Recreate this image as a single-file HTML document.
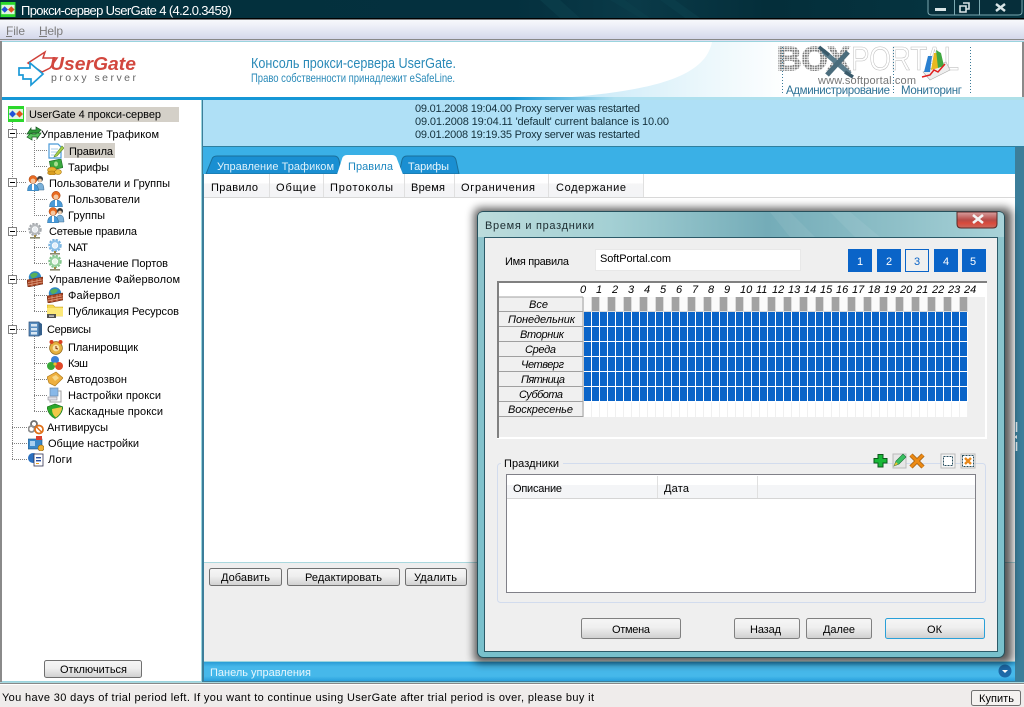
<!DOCTYPE html>
<html lang="ru">
<head>
<meta charset="utf-8">
<title>Прокси-сервер UserGate 4</title>
<style>
html,body{margin:0;padding:0;width:1024px;height:707px;overflow:hidden;background:#efefef}
svg{display:block}
text{font-family:"Liberation Sans","DejaVu Sans",sans-serif;font-size:11px;fill:#000}
.i{font-style:italic}
</style>
</head>
<body>
<svg width="1024" height="707" viewBox="0 0 1024 707" xmlns="http://www.w3.org/2000/svg">
<defs>
<linearGradient id="menu" x1="0" y1="0" x2="0" y2="1"><stop offset="0" stop-color="#f8f9fc"/><stop offset=".3" stop-color="#eef0f8"/><stop offset="1" stop-color="#d3d7ea"/></linearGradient>
<linearGradient id="hline" x1="0" y1="0" x2="1" y2="0"><stop offset="0" stop-color="#1597d6"/><stop offset=".5" stop-color="#1597d6"/><stop offset=".6" stop-color="#aee0f0"/><stop offset="1" stop-color="#aee0e8"/></linearGradient>
<linearGradient id="swoosh" x1="0" y1="0" x2="1" y2="0"><stop offset="0" stop-color="#c8e9f8"/><stop offset=".55" stop-color="#e8f6fb"/><stop offset="1" stop-color="#ffffff"/></linearGradient>
<linearGradient id="bar" x1="0" y1="0" x2="0" y2="1"><stop offset="0" stop-color="#2a9cd6"/><stop offset=".25" stop-color="#46b8ea"/><stop offset=".75" stop-color="#46b8ea"/><stop offset="1" stop-color="#28a0dc"/></linearGradient>
<linearGradient id="btn" x1="0" y1="0" x2="0" y2="1"><stop offset="0" stop-color="#f6f6f6"/><stop offset=".45" stop-color="#efefef"/><stop offset="1" stop-color="#cfcfcf"/></linearGradient>
<linearGradient id="dlg" x1="0" y1="0" x2="1" y2="0"><stop offset="0" stop-color="#bcdcdc"/><stop offset=".25" stop-color="#a4d0d4"/><stop offset=".55" stop-color="#74acb8"/><stop offset=".8" stop-color="#8fc0c8"/><stop offset="1" stop-color="#a8d2d8"/></linearGradient>
<linearGradient id="frame" x1="0" y1="0" x2="0" y2="1"><stop offset="0" stop-color="#8fc4cc"/><stop offset="1" stop-color="#78c0cc"/></linearGradient>
<linearGradient id="close" x1="0" y1="0" x2="0" y2="1"><stop offset="0" stop-color="#d8a0a0"/><stop offset=".5" stop-color="#b84a46"/><stop offset=".7" stop-color="#d84a3c"/><stop offset="1" stop-color="#c86a60"/></linearGradient>
<linearGradient id="head" x1="0" y1="0" x2="0" y2="1"><stop offset="0" stop-color="#ffffff"/><stop offset=".4" stop-color="#ffffff"/><stop offset=".42" stop-color="#f5f5f6"/><stop offset="1" stop-color="#f3f4f6"/></linearGradient>
<linearGradient id="title" x1="0" y1="0" x2="1" y2="0"><stop offset="0" stop-color="#02303c"/><stop offset=".5" stop-color="#04303e"/><stop offset=".62" stop-color="#0a3a48"/><stop offset=".75" stop-color="#042e3a"/><stop offset="1" stop-color="#063642"/></linearGradient>
<pattern id="blue" x="584" y="312" width="8" height="15" patternUnits="userSpaceOnUse"><rect width="7" height="14" fill="#0a64c8"/></pattern>
<pattern id="sun" x="584" y="402" width="8" height="15" patternUnits="userSpaceOnUse"><rect width="8" height="15" fill="#f0f0f0"/><rect width="7" height="15" fill="#fff"/></pattern>
<pattern id="all" x="584" y="297" width="16" height="15" patternUnits="userSpaceOnUse"><rect width="16" height="15" fill="#dcdcdc"/><rect width="7" height="14" fill="#fafafa"/><rect x="8" width="7" height="14" fill="#a2a2a2"/></pattern>
<pattern id="dots" x="0" y="0" width="2.5" height="2.5" patternUnits="userSpaceOnUse"><rect width="1.8" height="1.8" fill="#7c7c7c"/></pattern>
<filter id="sh" x="-10%" y="-10%" width="120%" height="120%"><feGaussianBlur stdDeviation="4.5"/></filter>

<symbol id="traffic" viewBox="0 0 16 16"><path d="M1 9 L5 3 L5 5 L10 5 L10 2 L15 5 L11 9 L10 8 L6 8 L6 9Z" fill="#2f9a3a" stroke="#185a20" stroke-width=".7"/><path d="M15 8 L11 14 L11 12 L6 12 L6 15 L1 12 L5 8 L6 9 L10 9 L10 8Z" fill="#58c45e" stroke="#185a20" stroke-width=".7"/></symbol>
<symbol id="doc" viewBox="0 0 16 16"><path d="M1 1H10L13 4V15H1Z" fill="#fff" stroke="#4a9ad8" stroke-width="1.2"/><path d="M3 6H10M3 9H9M3 12H8" stroke="#a8cce8"/><path d="M7 12 L14 3 L16 5 L9 13 L6 14Z" fill="#a8d048" stroke="#5a8a28" stroke-width=".6"/></symbol>
<symbol id="money" viewBox="0 0 16 16"><rect x="3" y="1" width="12" height="9" fill="#3aa83e" stroke="#1c6a24" stroke-width=".6" transform="rotate(-12 9 5)"/><ellipse cx="9" cy="5" rx="2" ry="2.5" fill="#a6e08e"/><ellipse cx="5" cy="11" rx="4.4" ry="3" fill="#e8b030" stroke="#a87410" stroke-width=".6"/><ellipse cx="5" cy="14" rx="4.4" ry="2" fill="#d89c20" stroke="#a87410" stroke-width=".6"/><ellipse cx="11" cy="13" rx="3.4" ry="2.4" fill="#f0c040" stroke="#a87410" stroke-width=".6"/></symbol>
<symbol id="users" viewBox="0 0 18 16"><circle cx="13" cy="4" r="3" fill="#3a3a3a"/><circle cx="13" cy="5.4" r="1.8" fill="#f0d0b0"/><path d="M9 15 Q9 8 13 8 Q17 8 17 15Z" fill="#7ab0d8" stroke="#3a6a90" stroke-width=".5"/><circle cx="6" cy="4.5" r="4" fill="#e86a20" stroke="#a04010" stroke-width=".5"/><circle cx="6" cy="6" r="2.4" fill="#f6c8a0"/><path d="M0.5 16 Q0.5 9 6 9 Q11.5 9 11.5 16Z" fill="#4a9ad8" stroke="#2a6a98" stroke-width=".5"/><path d="M5 9H7V15H5Z" fill="#fff"/></symbol>
<symbol id="user" viewBox="0 0 16 16"><circle cx="8" cy="4.5" r="4.2" fill="#e86a20" stroke="#a04010" stroke-width=".5"/><circle cx="8" cy="6" r="2.5" fill="#f6c8a0"/><path d="M1.5 16 Q1.5 9 8 9 Q14.5 9 14.5 16Z" fill="#4a9ad8" stroke="#2a6a98" stroke-width=".5"/><path d="M7 9H9V15H7Z" fill="#fff"/></symbol>
<symbol id="gear" viewBox="0 0 16 16"><circle cx="8" cy="6.5" r="5" fill="none" stroke="#a4a8ac" stroke-width="3.4" stroke-dasharray="2 1"/><circle cx="8" cy="6.5" r="4.2" fill="none" stroke="#b4b8bc" stroke-width="2"/><circle cx="8" cy="6.5" r="2.4" fill="#e8ecf0"/><rect x="7" y="12" width="2" height="3" fill="#a08840"/><rect x="3" y="14" width="10" height="1.6" fill="#8a8a70"/></symbol>
<symbol id="gearb" viewBox="0 0 16 16"><circle cx="8" cy="6.5" r="5" fill="none" stroke="#7ab4e0" stroke-width="3.4" stroke-dasharray="2 1"/><circle cx="8" cy="6.5" r="4.2" fill="none" stroke="#8cc0e8" stroke-width="2"/><circle cx="8" cy="6.5" r="2.4" fill="#e4f0fa"/><rect x="7" y="12" width="2" height="3" fill="#a08840"/><rect x="3" y="14" width="10" height="1.6" fill="#8a8a70"/></symbol>
<symbol id="gearg" viewBox="0 0 16 16"><circle cx="8" cy="6.5" r="5" fill="none" stroke="#80c48a" stroke-width="3.4" stroke-dasharray="2 1"/><circle cx="8" cy="6.5" r="4.2" fill="none" stroke="#94d09c" stroke-width="2"/><circle cx="8" cy="6.5" r="2.4" fill="#e8f6ea"/><rect x="7" y="12" width="2" height="3" fill="#a08840"/><rect x="3" y="14" width="10" height="1.6" fill="#8a8a70"/></symbol>
<symbol id="fire" viewBox="0 0 16 16"><circle cx="8" cy="6.5" r="6.2" fill="#2f88c4"/><path d="M3 4 Q8 0 11 3 Q9 7 5 7Z" fill="#58b058"/><path d="M0 9 L16 6 L16 13 L1 16Z" fill="#a84424" stroke="#6a2810" stroke-width=".6"/><path d="M1 11.5 L16 8.8M1 14 L16 11M5 8.5 V15 M10 7.5 V14 M13 7 V10" stroke="#e0a080" stroke-width=".7"/></symbol>
<symbol id="folder" viewBox="0 0 16 16"><path d="M0 2H6L8 4H16V13H0Z" fill="#f4d850" stroke="#c8a020" stroke-width=".6"/><path d="M0 5H16V13H0Z" fill="#fce878"/><rect x="0" y="11" width="9" height="4" fill="#505050"/><rect x="2" y="12.5" width="5" height="1.2" fill="#e0e0e0"/></symbol>
<symbol id="cab" viewBox="0 0 16 16"><path d="M2 1H12V15H2Z" fill="#5a8ec0" stroke="#2a4e78" stroke-width=".7"/><path d="M12 1L15 3V14L12 15Z" fill="#35608c"/><rect x="4" y="3" width="6" height="2.5" fill="#d8e6f2"/><rect x="4" y="7" width="6" height="2.5" fill="#d8e6f2"/><rect x="4" y="11" width="6" height="2.5" fill="#d8e6f2"/></symbol>
<symbol id="clock" viewBox="0 0 16 16"><circle cx="8" cy="9" r="6.4" fill="#e4b040" stroke="#8a6010" stroke-width=".7"/><circle cx="8" cy="9" r="3.4" fill="#f8e4a8"/><path d="M8 7V9.5L10 10" stroke="#803010" fill="none"/><circle cx="3.5" cy="3" r="2" fill="#d84020"/><circle cx="12.5" cy="3" r="2" fill="#d84020"/></symbol>
<symbol id="cache" viewBox="0 0 16 16"><circle cx="8" cy="5" r="4" fill="#3a80d8"/><circle cx="4" cy="11" r="4" fill="#38a838"/><circle cx="12" cy="11" r="4" fill="#e04828"/><circle cx="8" cy="9" r="1.6" fill="#f0c030"/></symbol>
<symbol id="phone" viewBox="0 0 16 16"><path d="M0 6 L9 1 L16 7 L8 15 L2 12Z" fill="#eeb040" stroke="#b07a18" stroke-width=".7"/><path d="M5 6 L9 4 L12 7 L8 10Z" fill="#f8d888"/></symbol>
<symbol id="proxy" viewBox="0 0 16 16"><rect x="3" y="1" width="8" height="8" fill="#88b8e8" stroke="#6a8ab0" stroke-width=".7"/><path d="M11 4H14V15H3V11" fill="none" stroke="#a0a0a0"/><rect x="1" y="10" width="9" height="3" fill="#e0e0e8" stroke="#909098" stroke-width=".6"/></symbol>
<symbol id="shield" viewBox="0 0 16 16"><path d="M0 4 L8 1 L16 4 Q15 12 8 15.5 Q1 12 0 4Z" fill="#2ca82c" stroke="#186a18" stroke-width=".6"/><path d="M5 6 L15 4 Q15 10 9 14.5 Q5 12 5 6Z" fill="#f0c848"/></symbol>
<symbol id="av" viewBox="0 0 16 16"><circle cx="6" cy="5" r="3" fill="none" stroke="#707070" stroke-width="1.8"/><circle cx="3.5" cy="10" r="3" fill="none" stroke="#909090" stroke-width="1.8"/><circle cx="11" cy="10.5" r="4" fill="#fff" stroke="#e07018" stroke-width="1.8"/><path d="M8.5 8 L13.5 13" stroke="#e07018" stroke-width="1.4"/></symbol>
<symbol id="set" viewBox="0 0 16 16"><rect x="0" y="4" width="14" height="10" fill="#3a88c8" stroke="#1c5080" stroke-width=".6"/><rect x="2" y="6" width="5" height="5" fill="#a8d0f0"/><rect x="8" y="1" width="6" height="4" fill="#d84030"/><circle cx="13" cy="13" r="3" fill="#f0b030" stroke="#906010" stroke-width=".6"/></symbol>
<symbol id="log" viewBox="0 0 16 16"><circle cx="5" cy="7" r="5" fill="#2a70c0"/><rect x="6" y="3" width="9" height="12" fill="#fff" stroke="#303050" stroke-width=".8"/><rect x="8" y="6" width="5" height="1.4" fill="#2a50a0"/><rect x="8" y="9" width="5" height="1.4" fill="#2a50a0"/><rect x="8" y="12" width="3" height="1" fill="#f0a020"/></symbol>
<symbol id="ug" viewBox="0 0 16 16"><rect width="16" height="16" fill="#2cd82c"/><rect x="1" y="3" width="14" height="10" fill="#dff5df"/><path d="M1 8 L4.5 4.5 L8 8 L4.5 11.5Z" fill="#2050d8"/><path d="M8 8 L11.5 4.5 L15 8 L11.5 11.5Z" fill="#e0521c"/></symbol>
</defs>

<!-- title bar -->
<rect width="1024" height="18" fill="url(#title)"/>
<path d="M540 0L560 18H580L560 0ZM610 0L640 18H650L625 0ZM660 0L685 18H700L675 0Z" fill="#0c3e4c" opacity=".7"/>
<use href="#ug" x="0" y="2" width="16" height="15"/>
<text x="21" y="15" textLength="211" style="font-size:13px;fill:#fff">Прокси-сервер UserGate 4 (4.2.0.3459)</text>
<path d="M928 0V12Q928 15 932 15H1018Q1022 15 1022 12V0" fill="#062e3a" stroke="#7aa8b0"/>
<path d="M954.5 0V15M979.5 0V15" stroke="#7aa8b0"/>
<rect x="935" y="8" width="11" height="3" fill="#d8e4e6"/>
<path d="M960 6H966V12H960Z M963 3H969V9H966" fill="none" stroke="#d8e4e6" stroke-width="1.6"/>
<path d="M996 4L1005 11M1005 4L996 11" stroke="#d8e4e6" stroke-width="2.4"/>
<rect y="18" width="1024" height="1.5" fill="#000"/>

<!-- menu -->
<rect y="19.5" width="1024" height="20" fill="url(#menu)"/>
<rect y="39" width="1024" height="1" fill="#888"/>
<rect y="40" width="1024" height="1" fill="#dde"/>
<text x="6" y="35" textLength="19" style="font-size:12px;fill:#7c7c7c">File</text>
<text x="39" y="35" textLength="24" style="font-size:12px;fill:#7c7c7c">Help</text>
<path d="M6 36.5H12M39 36.5H47" stroke="#7c7c7c"/>

<!-- header -->
<rect y="41" width="1024" height="59" fill="#8a8a8a"/>
<rect x="2" y="41" width="1022" height="1" fill="#9ad4de"/>
<rect x="2" y="42" width="1020" height="55" fill="#fff"/>
<path d="M572 97C650 90 705 78 712 42H790V97Z" fill="url(#swoosh)"/>
<rect x="2" y="97" width="1022" height="3" fill="url(#hline)"/>
<!-- logo -->
<path d="M28 63L45 52L43 58L57 58L50 68L42 72Z" fill="#fff" stroke="#d0413a" stroke-width="1.5"/>
<path d="M19 68L30 68L30 63L43 74L31 85L31 79L23 79L23 75L19 75Z" fill="#fff" stroke="#1c9ad8" stroke-width="1.7"/>
<text x="50" y="70" textLength="86" lengthAdjust="spacingAndGlyphs" style="font-size:18px;font-weight:bold;font-style:italic;fill:#d2473e">UserGate</text>
<text x="51" y="81" textLength="85" style="font-size:10.5px;fill:#666">proxy server</text>
<text x="251" y="68" textLength="205" lengthAdjust="spacingAndGlyphs" style="font-size:15px;fill:#2a8ab8">Консоль прокси-сервера UserGate.</text>
<text x="251" y="82" textLength="204" lengthAdjust="spacingAndGlyphs" style="font-size:12px;fill:#2a8ab8">Право собственности принадлежит eSafeLine.</text>
<!-- watermark -->
<text x="777" y="70" textLength="73" lengthAdjust="spacingAndGlyphs" style="font-size:33px;font-weight:bold;fill:url(#dots);stroke:url(#dots);stroke-width:1.6">BOX</text>
<text x="851" y="70" textLength="108" lengthAdjust="spacingAndGlyphs" style="font-size:33px;fill:#fff;stroke:#c0c0c0;stroke-width:.6">PORTAL</text>
<path d="M823 51L850 74" stroke="#5a7c8c" stroke-width="5"/>
<path d="M848 52L827 75" stroke="#4a6c7c" stroke-width="5"/>
<path d="M819 47L829 55M845 72L853 77" stroke="#3a5a6a" stroke-width="3.4"/>
<path d="M923 72L946 62L950 70L930 80Z" fill="#eee" stroke="#aaa" stroke-width=".6"/>
<path d="M924 72L928 56L932 56L930 72Z" fill="#2a80d0"/><path d="M931 70L934 53L939 53L938 68Z" fill="#e8b820"/><path d="M938 68L936 50L941 53L944 66Z" fill="#40a840"/>
<path d="M922 77L930 75L934 70L938 72L945 64" fill="none" stroke="#e02020" stroke-width="1.5"/>
<text x="818" y="84" textLength="98" style="font-size:11px;fill:#777">www.softportal.com</text>
<path d="M782.5 47V94M893.5 47V94M970.5 47V94" stroke="#3a7a98" stroke-dasharray="1 2"/>
<text x="786" y="94" textLength="104" style="font-size:11.5px;fill:#2e7296">Администрирование</text>
<text x="901" y="94" textLength="61" style="font-size:11.5px;fill:#2e7296">Мониторинг</text>

<!-- left panel -->
<rect x="0" y="100" width="203" height="585" fill="#8a8a8a"/>
<rect x="2" y="100" width="199" height="581" fill="#fff"/>
<rect x="2" y="681" width="199" height="1" fill="#9ad4de"/>
<rect x="201" y="100" width="1" height="582" fill="#9ad4de"/>

<!-- tree lines -->
<g stroke="#808080" stroke-dasharray="1 1" fill="none">
<path d="M12.5 120V459M34.5 140V166M34.5 189V215M34.5 238V263M34.5 286V311M34.5 336V411"/>
<path d="M17 133.5H26M17 182.5H26M17 231.5H26M17 279.5H26M17 329.5H26M12 427.5H28M12 443.5H28M12 459.5H28"/>
<path d="M34 150.5H48M34 166.5H48M34 199.5H48M34 215.5H48M34 247.5H48M34 263.5H48M34 295.5H48M34 311.5H48M34 347.5H48M34 363.5H48M34 379.5H48M34 395.5H48M34 411.5H48"/>
</g>
<g fill="#fff" stroke="#808080">
<rect x="8.5" y="129.5" width="8" height="8"/><rect x="8.5" y="178.5" width="8" height="8"/><rect x="8.5" y="227.5" width="8" height="8"/><rect x="8.5" y="275.5" width="8" height="8"/><rect x="8.5" y="325.5" width="8" height="8"/>
</g>
<path d="M10 133.5H15M10 182.5H15M10 231.5H15M10 279.5H15M10 329.5H15" stroke="#000"/>

<!-- tree icons -->
<use href="#ug" x="8" y="106" width="16" height="16"/>
<use href="#traffic" x="26" y="125" width="16" height="16"/>
<use href="#doc" x="48" y="143" width="16" height="16"/>
<use href="#money" x="47" y="159" width="16" height="16"/>
<use href="#users" x="27" y="175" width="18" height="16"/>
<use href="#user" x="48" y="191" width="16" height="16"/>
<use href="#users" x="47" y="207" width="18" height="16"/>
<use href="#gear" x="27" y="223" width="16" height="16"/>
<use href="#gearb" x="47" y="239" width="16" height="16"/>
<use href="#gearg" x="47" y="255" width="16" height="16"/>
<use href="#fire" x="27" y="271" width="16" height="16"/>
<use href="#fire" x="47" y="287" width="16" height="16"/>
<use href="#folder" x="47" y="303" width="16" height="16"/>
<use href="#cab" x="27" y="321" width="16" height="16"/>
<use href="#clock" x="48" y="339" width="16" height="16"/>
<use href="#cache" x="47" y="355" width="16" height="16"/>
<use href="#phone" x="47" y="371" width="16" height="16"/>
<use href="#proxy" x="47" y="387" width="16" height="16"/>
<use href="#shield" x="47" y="403" width="16" height="16"/>
<use href="#av" x="28" y="419" width="16" height="16"/>
<use href="#set" x="28" y="435" width="16" height="16"/>
<use href="#log" x="28" y="451" width="16" height="16"/>

<rect x="26" y="107" width="153" height="15" fill="#d4d0c8"/>
<rect x="64" y="143" width="51" height="15" fill="#d4d0c8"/>
<g>
<text x="29" y="118" textLength="132">UserGate 4 прокси-сервер</text>
<text x="41" y="138" textLength="118">Управление Трафиком</text>
<text x="69" y="155" textLength="44">Правила</text>
<text x="68" y="171" textLength="41">Тарифы</text>
<text x="49" y="187" textLength="121">Пользователи и Группы</text>
<text x="68" y="203" textLength="72">Пользователи</text>
<text x="68" y="219" textLength="37">Группы</text>
<text x="49" y="235" textLength="88">Сетевые правила</text>
<text x="68" y="251" textLength="20">NAT</text>
<text x="68" y="267" textLength="100">Назначение Портов</text>
<text x="49" y="283" textLength="131">Управление Файерволом</text>
<text x="68" y="299" textLength="52">Файервол</text>
<text x="68" y="315" textLength="111">Публикация Ресурсов</text>
<text x="47" y="333" textLength="44">Сервисы</text>
<text x="68" y="351" textLength="70">Планировщик</text>
<text x="68" y="367" textLength="20">Кэш</text>
<text x="67" y="383" textLength="60">Автодозвон</text>
<text x="68" y="399" textLength="93">Настройки прокси</text>
<text x="68" y="415" textLength="95">Каскадные прокси</text>
<text x="47" y="431" textLength="61">Антивирусы</text>
<text x="48" y="447" textLength="91">Общие настройки</text>
<text x="48" y="463" textLength="24">Логи</text>
</g>
<rect x="44.5" y="660.5" width="97" height="17" rx="2" fill="url(#btn)" stroke="#707070"/>
<text x="60" y="673" textLength="67">Отключиться</text>

<!-- right panel -->
<rect x="202" y="100" width="822" height="585" fill="#3c7e9a"/>
<rect x="203" y="100" width="821" height="47" fill="#afe0f6"/>
<rect x="203" y="146" width="821" height="1" fill="#2f7f9f"/>
<rect x="203" y="147" width="821" height="27" fill="#3ab0e6"/>
<text x="415" y="112" textLength="225" style="fill:#14303c">09.01.2008 19:04.00 Proxy server was restarted</text>
<text x="415" y="125" textLength="254" style="fill:#14303c">09.01.2008 19:04.11 'default' current balance is 10.00</text>
<text x="415" y="138" textLength="225" style="fill:#14303c">09.01.2008 19:19.35 Proxy server was restarted</text>

<rect x="204" y="174" width="811" height="388" fill="#fff"/>
<path d="M206 174L212 159Q213 156 217 156H334Q338 156 339 160L342 174Z" fill="#1a8fd2" stroke="#1a6f9a"/>
<path d="M399 174L402 160Q403 156 407 156H451Q455 156 456 160L459 174Z" fill="#1a8fd2" stroke="#1a6f9a"/>
<path d="M337 174.5L342 159Q343 155 347 155H392Q396 155 397 159L403 174.5Z" fill="#fff"/>
<text x="217" y="170" textLength="117" style="fill:#dff2fb">Управление Трафиком</text>
<text x="348" y="170" textLength="45" style="fill:#1e88c0">Правила</text>
<text x="408" y="170" textLength="41" style="fill:#e8f6fc">Тарифы</text>

<rect x="204" y="174" width="440" height="23" fill="url(#head)"/>
<rect x="204" y="197" width="811" height="1" fill="#d8d8d8"/>
<path d="M269.5 174V197M323.5 174V197M404.5 174V197M454.5 174V197M548.5 174V197M643.5 174V197" stroke="#e0e0e0"/>
<text x="211" y="191" textLength="47">Правило</text>
<text x="276" y="191" textLength="40">Общие</text>
<text x="330" y="191" textLength="63">Протоколы</text>
<text x="411" y="191" textLength="34">Время</text>
<text x="461" y="191" textLength="74">Ограничения</text>
<text x="556" y="191" textLength="70">Содержание</text>

<rect x="204" y="562" width="811" height="1" fill="#aad8de"/>
<rect x="204" y="563" width="811" height="99" fill="#eeeeee"/>
<g fill="url(#btn)" stroke="#707070">
<rect x="209.5" y="568.5" width="72" height="17" rx="2"/>
<rect x="287.5" y="568.5" width="112" height="17" rx="2"/>
<rect x="405.5" y="568.5" width="61" height="17" rx="2"/>
</g>
<text x="221" y="581" textLength="49">Добавить</text>
<text x="305" y="581" textLength="77">Редактировать</text>
<text x="414" y="581" textLength="43">Удалить</text>

<rect x="204" y="662" width="811" height="19" fill="url(#bar)"/>
<rect x="204" y="661" width="811" height="1" fill="#9ad4de"/>
<text x="210" y="676" textLength="101" style="fill:#e6f6fd">Панель управления</text>
<circle cx="1005" cy="671" r="6.5" fill="#1e6aa8"/>
<path d="M1002 670H1008L1005 673Z" fill="#fff"/>

<!-- collapse bar -->
<rect x="1015" y="147" width="9" height="536" fill="#3c7e9a"/>
<path d="M1016.5 422V432M1016.5 442V451" stroke="#e4eef2" stroke-width="1.6"/>
<path d="M1014 437L1017 435V439Z" fill="#e4eef2"/>

<!-- status -->
<rect y="682" width="1024" height="1" fill="#aad8de"/>
<rect y="683" width="1024" height="1" fill="#888"/>
<rect y="684" width="1024" height="1" fill="#fff"/>
<rect y="685" width="1024" height="22" fill="#efeceb"/>
<text x="2" y="701" textLength="592">You have 30 days of trial period left. If you want to continue using UserGate after trial period is over, please buy it</text>
<rect x="971.5" y="690.5" width="49" height="15" rx="2" fill="#f4f2f0" stroke="#707070"/>
<text x="979" y="702" textLength="35">Купить</text>

<!-- dialog -->
<rect x="474" y="208" width="538" height="455" rx="6" fill="#000" opacity=".65" filter="url(#sh)"/>
<rect x="477.5" y="211.5" width="527" height="446" rx="6" fill="url(#frame)" stroke="#26505c"/>
<path d="M478 237V217Q478 212 484 212H998Q1004 212 1004 217V237Z" fill="url(#dlg)"/>
<path d="M770 212L790 237H815L790 212ZM830 212L855 237H880L850 212Z" fill="#fff" opacity=".07"/>
<path d="M957 212H997V224Q997 228 993 228H961Q957 228 957 224Z" fill="url(#close)" stroke="#5a2a28"/>
<path d="M973 215L983 223M983 215L973 223" stroke="#f4f4f4" stroke-width="2.6"/>
<text x="485" y="229" textLength="109" style="fill:#1c2c30">Время и праздники</text>
<rect x="484.5" y="237.5" width="513" height="414" fill="#efefef" stroke="#2c5a68"/>

<text x="505" y="265" textLength="64">Имя правила</text>
<rect x="595.5" y="249.5" width="205" height="21" fill="#fff" stroke="#e8e8e8"/>
<text x="600" y="262" textLength="71">SoftPortal.com</text>

<g fill="#0a64c8">
<rect x="848" y="249" width="24" height="23"/><rect x="877" y="249" width="24" height="23"/>
<rect x="934" y="249" width="24" height="23"/><rect x="962" y="249" width="24" height="23"/>
</g>
<rect x="905.5" y="249.5" width="23" height="22" fill="#efefef" stroke="#0a64c8"/>
<g style="text-anchor:middle">
<text x="860" y="265" style="fill:#fff">1</text><text x="889" y="265" style="fill:#fff">2</text>
<text x="917" y="265" style="fill:#0a64c8">3</text><text x="946" y="265" style="fill:#fff">4</text><text x="973" y="265" style="fill:#fff">5</text>
</g>

<!-- grid -->
<rect x="497" y="281" width="490" height="158" fill="#fff"/>
<rect x="499" y="283" width="486" height="154" fill="#efefef"/>
<path d="M497 281H987V283H499V438H497Z" fill="#808080"/>
<rect x="499" y="283" width="486" height="14" fill="#fff"/>
<rect x="584" y="297" width="384" height="15" fill="url(#all)"/>
<rect x="584" y="312" width="384" height="90" fill="#fff"/>
<rect x="584" y="312" width="384" height="90" fill="url(#blue)"/>
<rect x="584" y="402" width="384" height="15" fill="url(#sun)"/>
<rect x="499" y="297" width="84" height="120" fill="#f0f0f0"/>
<path d="M499 311.5H583M499 326.5H583M499 341.5H583M499 356.5H583M499 371.5H583M499 386.5H583M499 401.5H583M499 416.5H583M583 297V417M499 297H583" stroke="#a0a0a0" fill="none"/>
<g>
<text class="i" x="529" y="308" textLength="19">Все</text>
<text class="i" x="508" y="323" textLength="67">Понедельник</text>
<text class="i" x="520" y="338" textLength="44">Вторник</text>
<text class="i" x="525" y="353" textLength="31">Среда</text>
<text class="i" x="521" y="368" textLength="43">Четверг</text>
<text class="i" x="521" y="383" textLength="44">Пятница</text>
<text class="i" x="519" y="398" textLength="44">Суббота</text>
<text class="i" x="508" y="413" textLength="65">Воскресенье</text>
</g>
<g>
<text class="i" x="580" y="293">0</text><text class="i" x="596" y="293">1</text><text class="i" x="612" y="293">2</text><text class="i" x="628" y="293">3</text><text class="i" x="644" y="293">4</text><text class="i" x="660" y="293">5</text><text class="i" x="676" y="293">6</text><text class="i" x="692" y="293">7</text><text class="i" x="708" y="293">8</text><text class="i" x="724" y="293">9</text>
<text class="i" x="740" y="293">10</text><text class="i" x="756" y="293">11</text><text class="i" x="772" y="293">12</text><text class="i" x="788" y="293">13</text><text class="i" x="804" y="293">14</text><text class="i" x="820" y="293">15</text><text class="i" x="836" y="293">16</text><text class="i" x="852" y="293">17</text><text class="i" x="868" y="293">18</text><text class="i" x="884" y="293">19</text><text class="i" x="900" y="293">20</text><text class="i" x="916" y="293">21</text><text class="i" x="932" y="293">22</text><text class="i" x="948" y="293">23</text><text class="i" x="964" y="293">24</text>
</g>

<!-- holidays -->
<rect x="497.5" y="463.5" width="488" height="139" rx="3" fill="none" stroke="#d2dcee"/>
<rect x="501" y="458" width="62" height="10" fill="#efefef"/>
<text x="504" y="467" textLength="55">Праздники</text>
<rect x="506.5" y="474.5" width="469" height="118" fill="#fff" stroke="#808088"/>
<rect x="507" y="485" width="468" height="13" fill="#f4f5f7"/>
<rect x="507" y="498" width="468" height="1" fill="#d5d5d5"/>
<path d="M657.5 476V498M757.5 476V498" stroke="#e0e0e0"/>
<text x="513" y="492" textLength="49">Описание</text>
<text x="664" y="492" textLength="25">Дата</text>

<!-- toolbar -->
<path d="M874 458.5H878V454.5H883V458.5H887V463H883V467H878V463H874Z" fill="#18b838" stroke="#0c5a1c"/>
<path d="M893 454H906V468H893Z" fill="#e6e6e6" stroke="#bbb"/>
<path d="M894 466L896 461L903 454L906 457L899 464Z" fill="#38c060" stroke="#1c7038" stroke-width=".6"/>
<path d="M894 466L896 462L898 464Z" fill="#f0c030"/>
<path d="M911 455L923 467M923 455L911 467" stroke="#9a5a10" stroke-width="4.4"/>
<path d="M911 455L923 467M923 455L911 467" stroke="#ec8a14" stroke-width="3"/>
<rect x="941" y="454" width="14" height="14" fill="#f4f4f4" stroke="#bbb"/>
<rect x="943.5" y="456.5" width="9" height="9" fill="#fff" stroke="#2a5060" stroke-dasharray="2 1"/>
<rect x="961" y="454" width="14" height="14" fill="#f4f4f4" stroke="#bbb"/>
<rect x="962.5" y="455.5" width="11" height="11" fill="#fff" stroke="#2a5060" stroke-dasharray="2 1"/>
<path d="M965 458L971 464M971 458L965 464" stroke="#e8881c" stroke-width="2.4"/>

<!-- dialog buttons -->
<g fill="url(#btn)" stroke="#808080">
<rect x="581.5" y="618.5" width="99" height="20" rx="2"/>
<rect x="734.5" y="618.5" width="65" height="20" rx="2"/>
<rect x="806.5" y="618.5" width="65" height="20" rx="2"/>
</g>
<rect x="885.5" y="618.5" width="99" height="20" rx="2" fill="url(#btn)" stroke="#2aa0d8"/>
<text x="612" y="633" textLength="38">Отмена</text>
<text x="750" y="633" textLength="31">Назад</text>
<text x="823" y="633" textLength="32">Далее</text>
<text x="927" y="633" textLength="15">ОК</text>
</svg>
</body>
</html>
